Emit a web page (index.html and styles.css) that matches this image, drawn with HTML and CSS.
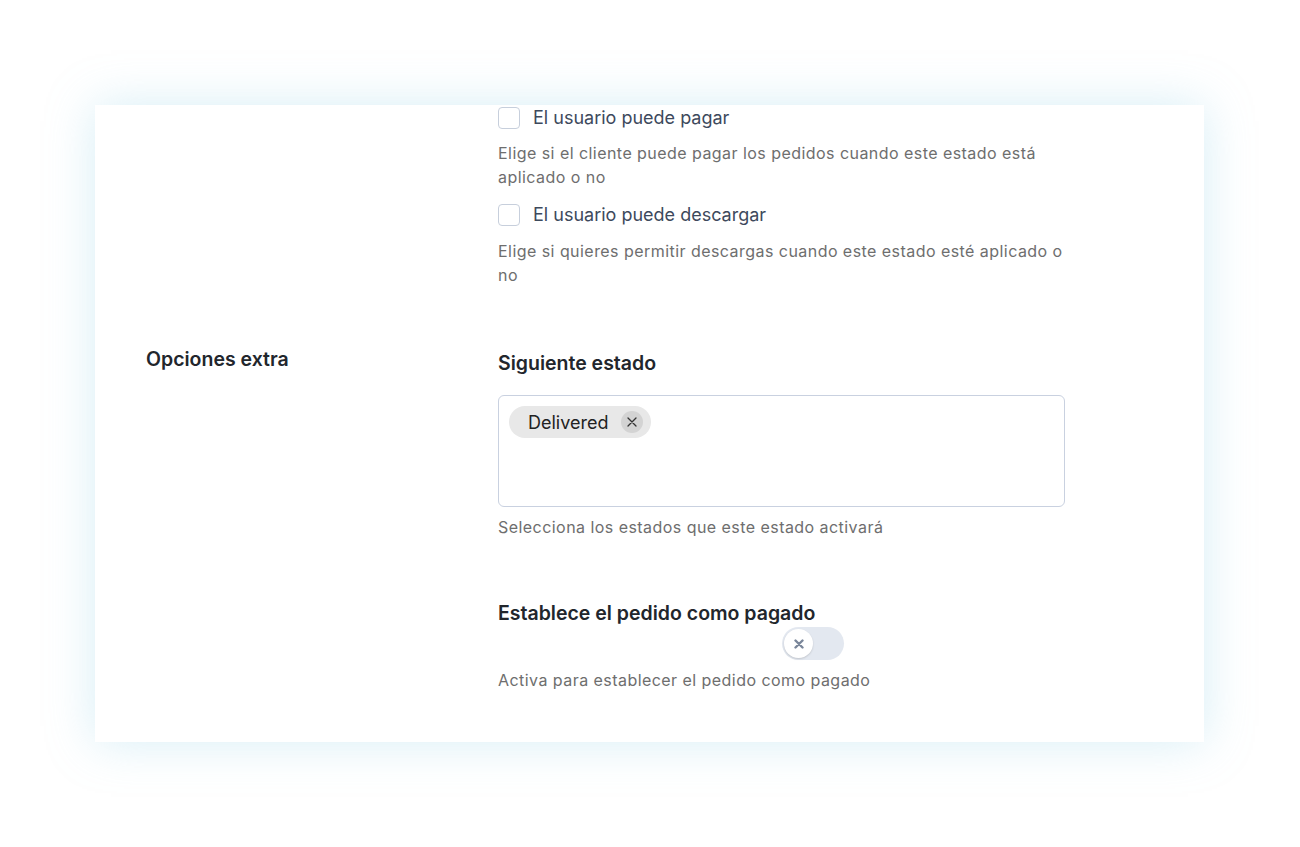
FILE: index.html
```html
<!DOCTYPE html>
<html>
<head>
    <title>Estado del pedido</title>
    <link rel="stylesheet" href="styles.css">
</head>
<body>

<div class="card">
    <div class="section">
        <div class="section-label"></div>
        <div class="section-body">
            <label class="check-row">
                <span class="check-box"></span>
                <span>El usuario puede pagar</span>
            </label>
            <p class="help help-check">Elige si el cliente puede pagar los pedidos cuando este estado está aplicado o no</p>
            <label class="check-row check-row-next">
                <span class="check-box"></span>
                <span>El usuario puede descargar</span>
            </label>
            <p class="help help-check help-check-next">Elige si quieres permitir descargas cuando este estado esté aplicado o no</p>
        </div>
    </div>

    <div class="section section-extra">
        <div class="section-label">Opciones extra</div>
        <div class="section-body">
            <h3 class="field-title">Siguiente estado</h3>
            <div class="multi-select">
                <span class="chip">
                    Delivered
                    <span class="chip-close">
                        <svg width="10" height="10" viewBox="0 0 10 10">
                            <path d="M1 1 L9 9 M9 1 L1 9" stroke="#333" stroke-width="1.3" stroke-linecap="round"/>
                        </svg>
                    </span>
                </span>
            </div>
            <p class="help help-field">Selecciona los estados que este estado activará</p>

            <h3 class="field-title field-title-next">Establece el pedido como pagado</h3>
            <div class="toggle-row">
                <span class="toggle">
                    <span class="toggle-knob">
                        <svg width="10" height="10" viewBox="0 0 10 10">
                            <path d="M1.5 1.5 L8.5 8.5 M8.5 1.5 L1.5 8.5" stroke="#7a869a" stroke-width="2.4" stroke-linecap="round"/>
                        </svg>
                    </span>
                </span>
            </div>
            <p class="help help-field">Activa para establecer el pedido como pagado</p>
        </div>
    </div>
</div>

</body>
</html>
```

FILE: styles.css
```css
body {
    font-family: Inter, 'Noto Sans', sans-serif;
    background-color: #fff;
    margin: 0;
    padding: 105px 0 105px 95px;
    min-height: 847px;
    box-sizing: border-box;
}

.card {
    width: 1109px;
    background-color: #fff;
    padding: 0 0 50px 51px;
    box-sizing: border-box;
    box-shadow: 0 0 45px rgba(140, 205, 230, 0.35);
}

.section {
    display: flex;
}

.section-label {
    width: 352px;
    flex-shrink: 0;
    font-size: 19.5px;
    font-weight: 600;
    color: #22262c;
    line-height: 28px;
    padding-top: 58px;
}

.section-body {
    width: 567px;
}

.check-row {
    display: flex;
    align-items: center;
    gap: 13px;
    font-size: 18px;
    line-height: 24px;
    color: #3d495c;
    padding-top: 1px;
}

.check-row-next {
    padding-top: 14px;
}

.check-box {
    width: 20px;
    height: 20px;
    border: 1px solid #c7cfdc;
    border-radius: 4px;
    background: #fff;
}

.help {
    margin: 0;
    font-size: 16px;
    line-height: 24px;
    color: #6e6e6e;
    letter-spacing: 0.45px;
}

.help-check {
    margin-top: 11px;
}

.help-check-next {
    margin-top: 12px;
}

.help-field {
    margin-top: 8px;
}

.field-title {
    margin: 62px 0 0;
    font-size: 19.5px;
    font-weight: 600;
    line-height: 28px;
    color: #22262c;
}

.field-title-next {
    margin-top: 60px;
}

.multi-select {
    margin-top: 18px;
    height: 112px;
    border: 1px solid #c9d1e0;
    border-radius: 6px;
    padding: 10px;
    box-sizing: border-box;
}

.chip {
    display: inline-flex;
    align-items: center;
    height: 32px;
    padding: 0 8px 0 19px;
    border-radius: 16px;
    background: #e8e8e8;
    font-size: 18px;
    color: #222;
    gap: 13px;
}

.chip-close {
    width: 22px;
    height: 22px;
    border-radius: 50%;
    background: #d3d3d3;
    display: flex;
    align-items: center;
    justify-content: center;
}

.toggle-row {
    padding-left: 284px;
    height: 33px;
}

.toggle {
    display: inline-block;
    width: 62px;
    height: 33px;
    border-radius: 17px;
    background: #e3e8f0;
    position: relative;
}

.toggle-knob {
    position: absolute;
    left: 2px;
    top: 2px;
    width: 29px;
    height: 29px;
    border-radius: 50%;
    background: #fff;
    box-shadow: 0 1px 2px rgba(0, 0, 0, 0.15);
    display: flex;
    align-items: center;
    justify-content: center;
}
```
